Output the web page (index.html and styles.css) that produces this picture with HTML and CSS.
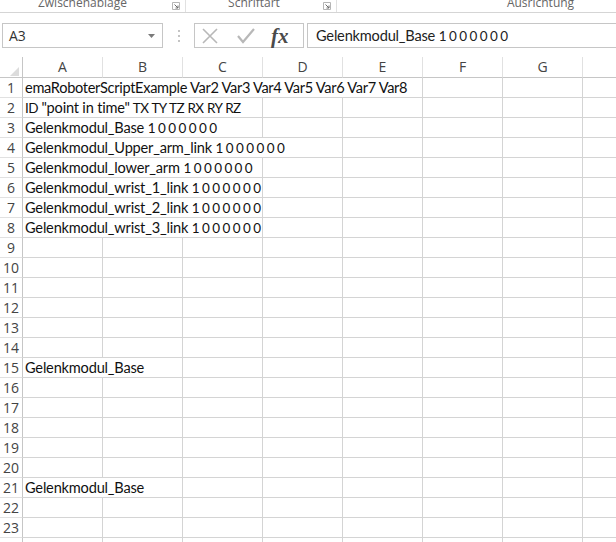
FILE: index.html
```html
<!DOCTYPE html>
<html>
<head>
<meta charset="utf-8">
<link rel="stylesheet" href="styles.css">
</head>
<body>
<div class="ribbon">
  <div class="group g1"><span class="glabel">Zwischenablage</span>
    <svg class="launcher" width="8" height="8" viewBox="0 0 8 8"><path d="M0.5 0.5H7.5V7.5H0.5Z" fill="none" stroke="#b5b5b5"/><path d="M2.5 2.5L6 6M6 3.5V6H3.5" fill="none" stroke="#6a6a6a"/></svg>
  </div>
  <div class="group g2"><span class="glabel">Schriftart</span>
    <svg class="launcher" width="8" height="8" viewBox="0 0 8 8"><path d="M0.5 0.5H7.5V7.5H0.5Z" fill="none" stroke="#b5b5b5"/><path d="M2.5 2.5L6 6M6 3.5V6H3.5" fill="none" stroke="#6a6a6a"/></svg>
  </div>
  <div class="group g3"><span class="glabel">Ausrichtung</span></div>
</div>

<div class="fbar">
  <div class="namebox"><span>A3</span>
    <svg class="ddarrow" width="7" height="4" viewBox="0 0 7 4"><path d="M0 0H7L3.5 4Z" fill="#7a7a7a"/></svg>
  </div>
  <div class="dots"><i></i><i></i><i></i></div>
  <div class="fbuttons">
    <svg width="18" height="18" viewBox="0 0 18 18"><path d="M2 2L16 16M16 2L2 16" stroke="#b8b8b8" stroke-width="1.6" fill="none"/></svg>
    <svg width="20" height="18" viewBox="0 0 20 18"><path d="M2 9L7 15L18 2" stroke="#b8b8b8" stroke-width="2.2" fill="none"/></svg>
    <span class="fx">fx</span>
  </div>
  <div class="finput">Gelenkmodul_Base<span class="num"> 1 0 0 0 0 0 0</span></div>
</div>

<div class="sheet">
  <div class="corner"><svg width="9" height="9" viewBox="0 0 9 9"><path d="M9 0V9H0Z" fill="#dcdcdc"/></svg></div>
  <div class="ch">A</div><div class="ch">B</div><div class="ch">C</div><div class="ch">D</div><div class="ch">E</div><div class="ch">F</div><div class="ch">G</div><div class="ch last"></div>

  <div class="rh">1</div><div class="c s5 tight">emaRoboterScriptExample Var2 Var3 Var4 Var5 Var6 Var7 Var8</div><div class="c"></div><div class="c"></div><div class="c last"></div>
  <div class="rh">2</div><div class="c s3"><span class="caps">ID</span> "point in time"<span class="caps"> TX TY TZ RX RY RZ</span></div><div class="c"></div><div class="c"></div><div class="c"></div><div class="c"></div><div class="c last"></div>
  <div class="rh">3</div><div class="c s3">Gelenkmodul_Base<span class="num"> 1 0 0 0 0 0 0</span></div><div class="c"></div><div class="c"></div><div class="c"></div><div class="c"></div><div class="c last"></div>
  <div class="rh">4</div><div class="c s4">Gelenkmodul_Upper_arm_link<span class="num"> 1 0 0 0 0 0 0</span></div><div class="c"></div><div class="c"></div><div class="c"></div><div class="c last"></div>
  <div class="rh">5</div><div class="c s3">Gelenkmodul_lower_arm<span class="num"> 1 0 0 0 0 0 0</span></div><div class="c"></div><div class="c"></div><div class="c"></div><div class="c"></div><div class="c last"></div>
  <div class="rh">6</div><div class="c s3">Gelenkmodul_wrist_1_link<span class="num"> 1 0 0 0 0 0 0</span></div><div class="c"></div><div class="c"></div><div class="c"></div><div class="c"></div><div class="c last"></div>
  <div class="rh">7</div><div class="c s3">Gelenkmodul_wrist_2_link<span class="num"> 1 0 0 0 0 0 0</span></div><div class="c"></div><div class="c"></div><div class="c"></div><div class="c"></div><div class="c last"></div>
  <div class="rh">8</div><div class="c s3">Gelenkmodul_wrist_3_link<span class="num"> 1 0 0 0 0 0 0</span></div><div class="c"></div><div class="c"></div><div class="c"></div><div class="c"></div><div class="c last"></div>
  <div class="rh">9</div><div class="c"></div><div class="c"></div><div class="c"></div><div class="c"></div><div class="c"></div><div class="c"></div><div class="c"></div><div class="c last"></div>
  <div class="rh">10</div><div class="c"></div><div class="c"></div><div class="c"></div><div class="c"></div><div class="c"></div><div class="c"></div><div class="c"></div><div class="c last"></div>
  <div class="rh">11</div><div class="c"></div><div class="c"></div><div class="c"></div><div class="c"></div><div class="c"></div><div class="c"></div><div class="c"></div><div class="c last"></div>
  <div class="rh">12</div><div class="c"></div><div class="c"></div><div class="c"></div><div class="c"></div><div class="c"></div><div class="c"></div><div class="c"></div><div class="c last"></div>
  <div class="rh">13</div><div class="c"></div><div class="c"></div><div class="c"></div><div class="c"></div><div class="c"></div><div class="c"></div><div class="c"></div><div class="c last"></div>
  <div class="rh">14</div><div class="c"></div><div class="c"></div><div class="c"></div><div class="c"></div><div class="c"></div><div class="c"></div><div class="c"></div><div class="c last"></div>
  <div class="rh">15</div><div class="c s2">Gelenkmodul_Base</div><div class="c"></div><div class="c"></div><div class="c"></div><div class="c"></div><div class="c"></div><div class="c last"></div>
  <div class="rh">16</div><div class="c"></div><div class="c"></div><div class="c"></div><div class="c"></div><div class="c"></div><div class="c"></div><div class="c"></div><div class="c last"></div>
  <div class="rh">17</div><div class="c"></div><div class="c"></div><div class="c"></div><div class="c"></div><div class="c"></div><div class="c"></div><div class="c"></div><div class="c last"></div>
  <div class="rh">18</div><div class="c"></div><div class="c"></div><div class="c"></div><div class="c"></div><div class="c"></div><div class="c"></div><div class="c"></div><div class="c last"></div>
  <div class="rh">19</div><div class="c"></div><div class="c"></div><div class="c"></div><div class="c"></div><div class="c"></div><div class="c"></div><div class="c"></div><div class="c last"></div>
  <div class="rh">20</div><div class="c"></div><div class="c"></div><div class="c"></div><div class="c"></div><div class="c"></div><div class="c"></div><div class="c"></div><div class="c last"></div>
  <div class="rh">21</div><div class="c s2">Gelenkmodul_Base</div><div class="c"></div><div class="c"></div><div class="c"></div><div class="c"></div><div class="c"></div><div class="c last"></div>
  <div class="rh">22</div><div class="c"></div><div class="c"></div><div class="c"></div><div class="c"></div><div class="c"></div><div class="c"></div><div class="c"></div><div class="c last"></div>
  <div class="rh">23</div><div class="c"></div><div class="c"></div><div class="c"></div><div class="c"></div><div class="c"></div><div class="c"></div><div class="c"></div><div class="c last"></div>
  <div class="rh">24</div><div class="c"></div><div class="c"></div><div class="c"></div><div class="c"></div><div class="c"></div><div class="c"></div><div class="c"></div><div class="c last"></div>
</div>
</body>
</html>
```

FILE: styles.css
```css
* { box-sizing: border-box; }
html, body { margin: 0; padding: 0; background: #fff; overflow: hidden; }
body {
  width: 616px;
  height: 542px;
  font-family: "Open Sans", "Noto Sans", sans-serif;
  color: #222;
}

.ribbon {
  height: 13px;
  border-bottom: 1px solid #d5d5d5;
  display: flex;
  overflow: hidden;
  background: #fff;
}
.group {
  position: relative;
  height: 12px;
  border-right: 1px solid #e1e1e1;
  display: flex;
  justify-content: center;
}
.g1 { width: 186px; }
.g2 { width: 151px; }
.g3 { flex: 1; border-right: none; }
.glabel {
  font-size: 12px;
  line-height: 12px;
  color: #666;
  margin-top: -3px;
}
.g1 .glabel { margin-right: 20px; }
.g2 .glabel { margin-right: 14px; }
.g3 .glabel { margin-left: 128px; }
.launcher {
  position: absolute;
  right: 5px;
  top: 2px;
}

.fbar {
  height: 44px;
  display: flex;
  align-items: flex-start;
  padding-top: 10px;
  padding-left: 2px;
}
.namebox {
  width: 161px;
  height: 25px;
  border: 1px solid #c6c6c6;
  display: flex;
  align-items: center;
  justify-content: space-between;
  padding: 0 7px 0 6px;
  font-size: 14px;
  color: #333;
}
.ddarrow { margin-top: 1px; }
.dots {
  width: 31px;
  height: 25px;
  display: flex;
  flex-direction: column;
  align-items: center;
  justify-content: center;
  gap: 3px;
}
.dots i {
  display: block;
  width: 2px;
  height: 2px;
  background: #c4c4c4;
}
.fbuttons {
  width: 110px;
  height: 25px;
  border: 1px solid #c6c6c6;
  display: flex;
  align-items: center;
  padding-left: 6px;
  gap: 17px;
}
.fx {
  font-family: "Liberation Serif", "DejaVu Serif", serif;
  font-style: italic;
  font-weight: bold;
  font-size: 21px;
  color: #4a4a4a;
  line-height: 20px;
  margin-left: -2px;
}
.finput {
  margin-left: 3px;
  flex: 1;
  height: 25px;
  border: 1px solid #c6c6c6;
  border-right: none;
  padding-left: 8px;
  font-family: "Lato", "Open Sans", sans-serif;
  font-size: 14.6px;
  letter-spacing: -0.2px;
  line-height: 23px;
  color: #222;
  white-space: nowrap;
}
.num { font-size: 13.5px; letter-spacing: -1.25px; word-spacing: 1.45px; }
.caps { font-size: 13.5px; letter-spacing: -0.6px; word-spacing: 0.6px; }

.sheet {
  display: grid;
  grid-template-columns: 23px repeat(7, 80px) 1fr;
  grid-auto-rows: 20px;
  grid-template-rows: 21px;
}
.corner {
  border-right: 1px solid #c6c6c6;
  border-bottom: 1px solid #c6c6c6;
  display: flex;
  align-items: flex-end;
  justify-content: flex-end;
  padding: 0 3px 1px 0;
}
.ch {
  border-right: 1px solid #e1e1e1;
  border-bottom: 1px solid #c6c6c6;
  text-align: center;
  font-size: 14px;
  line-height: 20px;
  color: #444;
}
.ch.last { border-right: none; }
.rh {
  border-right: 1px solid #c6c6c6;
  border-bottom: 1px solid #e1e1e1;
  text-align: center;
  font-size: 14px;
  line-height: 19px;
  color: #444;
}
.c {
  border-right: 1px solid #d4d4d4;
  border-bottom: 1px solid #d4d4d4;
  font-family: "Lato", "Open Sans", sans-serif;
  font-size: 14.6px;
  letter-spacing: -0.2px;
  line-height: 19px;
  padding-left: 2px;
  white-space: nowrap;
  color: #111;
}
.c.tight { letter-spacing: -0.32px; }
.c.last { border-right: none; }
.s2 { grid-column: span 2; }
.s3 { grid-column: span 3; }
.s4 { grid-column: span 4; }
.s5 { grid-column: span 5; }
```
